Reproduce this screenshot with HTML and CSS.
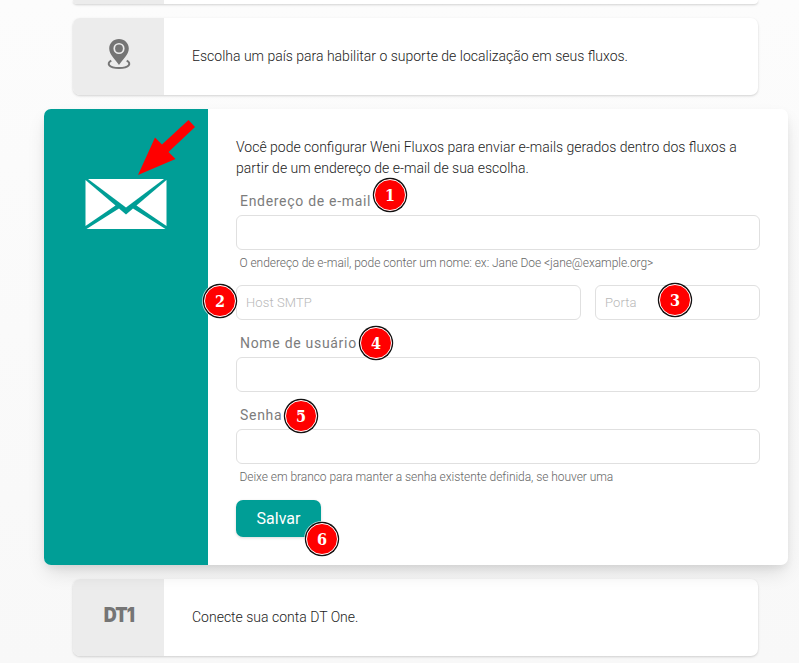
FILE: index.html
```html
<!DOCTYPE html>
<html lang="pt-BR">
<head>
<meta charset="utf-8">
<title>Configurações</title>
<link rel="stylesheet" href="styles.css">
</head>
<body>
<main class="page">
  <section class="card card-previous"><div class="side"></div></section>
  <section class="card">
    <div class="side">
      <svg class="pin" viewBox="0 0 24 32" width="24" height="32">
        <path d="M4.300 21.700C-.8 24.300 1.500 29 12 29S24.800 24.300 19.700 21.700" fill="none" stroke="currentColor" stroke-width="2"/>
        <path fill="currentColor" fill-rule="evenodd" d="M12 0C6.500 0 2.200 4.200 2.200 9.500c0 6 6.300 11.300 9.800 16.500 3.500-5.200 9.800-10.500 9.800-16.500C21.800 4.200 17.500 0 12 0Zm0 3.900a5.600 5.600 0 1 1 0 11.200 5.600 5.600 0 0 1 0-11.200Z"/>
        <circle cx="12" cy="9.500" r="3.900" fill="currentColor"/>
      </svg>
    </div>
    <p class="summary">Escolha um país para habilitar o suporte de localização em seus fluxos.</p>
  </section>
  <section class="card card-active">
    <div class="side">
      <svg class="envelope" viewBox="0 0 82 50" width="82" height="50" fill="#fff">
        <path d="M3 0H79L41 28.500Z"/>
        <path d="M.5 1 30.500 26.500.5 47Z"/>
        <path d="M81.500 1 51.500 26.500 81.500 47Z"/>
        <path d="M1.500 50 34 29.500 41 35.500 48 29.500 80.500 50Z"/>
      </svg>
    </div>
    <form class="form">
      <p class="intro">Você pode configurar Weni Fluxos para enviar e-mails gerados dentro dos fluxos a partir de um endereço de e-mail de sua escolha.</p>
      <label class="label" for="email">Endereço de e-mail</label>
      <input class="input" id="email" type="text">
      <p class="help">O endereço de e-mail, pode conter um nome: ex: Jane Doe &lt;jane@example.org&gt;</p>
      <div class="row">
        <input class="input" type="text" placeholder="Host SMTP">
        <input class="input" type="text" placeholder="Porta">
      </div>
      <label class="label" for="user">Nome de usuário</label>
      <input class="input" id="user" type="text">
      <label class="label label-password" for="password">Senha</label>
      <input class="input" id="password" type="password">
      <p class="help">Deixe em branco para manter a senha existente definida, se houver uma</p>
      <button class="save" type="button">Salvar</button>
    </form>
    <svg class="arrow" viewBox="0 0 60 60" width="60" height="60"><path fill="red" d="M0 56 17 18.500 24 25.500 50.500 1 57 8 30.500 33 37.500 40Z"/></svg>
    <span class="badge badge-1">1</span>
    <span class="badge badge-2">2</span>
    <span class="badge badge-3">3</span>
    <span class="badge badge-4">4</span>
    <span class="badge badge-5">5</span>
    <span class="badge badge-6">6</span>
  </section>
  <section class="card">
    <div class="side"><span class="dt">DT1</span></div>
    <p class="summary">Conecte sua conta DT One.</p>
  </section>
</main>
</body>
</html>
```
FILE: styles.css
```css
* { box-sizing: border-box; }
body {
  margin: 0;
  height: 663px;
  overflow: hidden;
  background: linear-gradient(#fcfcfc, #f8f8f8);
  font: 300 14px/21px Roboto, "Liberation Sans", sans-serif;
  color: #222;
}
p { margin: 0; }
.page { display: flex; flex-direction: column; gap: 14px; }
.card {
  display: flex;
  width: 685px;
  height: 77px;
  margin-left: 73px;
  border-radius: 7px;
  background: #fff;
  box-shadow: 0 1px 3px rgba(0, 0, 0, .1), 0 1px 2px rgba(0, 0, 0, .08);
}
.card-previous { height: 4px; border-radius: 0 0 7px 7px; }
.card-previous .side { border-radius: 0 0 0 7px; }
.side {
  display: flex;
  justify-content: center;
  width: 91px;
  flex: none;
  border-radius: 7px 0 0 7px;
  background: #ececec;
  color: #757575;
}
.pin { margin-top: 21px; }
.dt {
  height: 21px;
  margin-top: 26px;
  font: 900 20px/21px Inter, sans-serif;
  letter-spacing: -.9px;
  transform: scaleX(.9);
}
.summary { padding: 28px; }
.card-active {
  position: relative;
  width: 744px;
  height: 456px;
  margin-left: 44px;
  box-shadow: 0 10px 20px -3px rgba(0, 0, 0, .12), 0 4px 8px -2px rgba(0, 0, 0, .08);
}
.card-active .side { width: 164px; background: #009e96; }
.envelope { margin-top: 70px; }
.form { flex: 1; padding: 28px; }
.label {
  display: block;
  height: 22px;
  margin: 11px 0 3px 4px;
  font-weight: 400;
  letter-spacing: .7px;
  line-height: 22px;
  color: #7c7c7c;
}
.label-password { margin-top: 12px; }
.input {
  display: block;
  width: 100%;
  height: 35px;
  padding: 0 9px;
  border: 1px solid #e0e0e0;
  border-radius: 6px;
  background: #fff;
  font: 300 13px Roboto, sans-serif;
}
.input::placeholder { color: #b8b8b8; font-weight: 300; letter-spacing: .1px; }
.help {
  margin: 4px 0 0 3.500px;
  font-size: 12px;
  line-height: 18px;
  letter-spacing: -.05px;
  color: #666;
}
.row {
  display: grid;
  grid-template-columns: 345px 165px;
  gap: 14px;
  margin-top: 13px;
}
.row + .label { margin-top: 12px; }
.save {
  width: 85px;
  height: 37px;
  margin-top: 14px;
  padding: 0;
  border: 0;
  border-radius: 7px;
  background: #009e96;
  box-shadow: 0 1px 3px rgba(0, 0, 0, .15);
  color: #fff;
  font: 400 16px Roboto, sans-serif;
}
.arrow { position: absolute; left: 94px; top: 10px; }
.badge {
  position: absolute;
  width: 32px;
  height: 32px;
  border: 1px solid #fff;
  border-radius: 50%;
  background: red;
  box-shadow: 0 0 0 1.200px #111, 0 0 0 2px rgba(255, 255, 255, .7);
  color: #fff;
  font: 700 16px/32px "DejaVu Serif Condensed", "DejaVu Serif", serif;
  text-align: center;
}
.badge-1 { left: 330px; top: 70px; }
.badge-2 { left: 160px; top: 176px; }
.badge-3 { left: 615px; top: 175px; }
.badge-4 { left: 316px; top: 218px; }
.badge-5 { left: 241px; top: 291px; }
.badge-6 { left: 262px; top: 414px; }
```
